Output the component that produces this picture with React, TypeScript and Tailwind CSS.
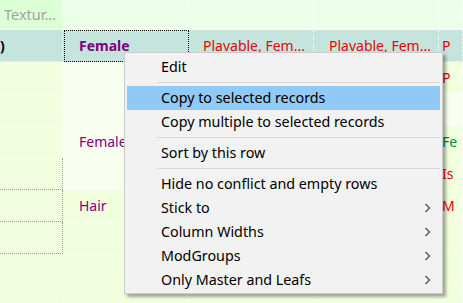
import React from "react";

const W = ["w-[63px]", "w-[125px]", "w-[126px]", "w-[125px]", "w-[24px]"];

type Cell = { t?: string; c?: string; b?: boolean; pl?: string };
type Row = { h: string; bg: string[]; bb: string; vr: string[]; cells: Cell[] };

const G = "border-[#9a9a9a]";
const Wh = "border-white";

const base = "bg-[#f2ffdf]";
const light = "bg-[#f8fff0]";

const rows: Row[] = [
  {
    h: "h-[30px]",
    bg: ["bg-[#dcffd5]", "bg-[#ecffe8]", "bg-[#ecffe8]", "bg-[#ecffe8]", "bg-[#ecffe8]"],
    bb: Wh,
    vr: [Wh, Wh, Wh, Wh, Wh],
    cells: [{ t: "Textur...", c: "text-[#a3a3a3] text-[14.5px]", pl: "pl-[4px]" }, {}, {}, {}, {}],
  },
  {
    h: "h-[32px]",
    bg: ["bg-[#c5e4dd]", "bg-[#c5e4dd]", "bg-[#c5e4dd]", "bg-[#c5e4dd]", "bg-[#c5e4dd]"],
    bb: "border-transparent",
    vr: [Wh, "border-transparent", Wh, Wh, Wh],
    cells: [
      { t: ")", c: "text-black", b: true, pl: "pl-0" },
      { t: "Female", c: "text-[#800080]", b: true, pl: "pl-[16px]" },
      { t: "Plavable, Fem...", c: "text-[#f00000]", pl: "pl-[15px]" },
      { t: "Plavable, Fem...", c: "text-[#f00000]", pl: "pl-[15px]" },
      { t: "P", c: "text-[#f00000]", pl: "pl-[3px]" },
    ],
  },
  {
    h: "h-[32px]",
    bg: [base, light, light, light, base],
    bb: Wh,
    vr: [G, Wh, Wh, Wh, Wh],
    cells: [{}, {}, {}, {}, { t: "P", c: "text-[#f00000]", pl: "pl-[3px]" }],
  },
  {
    h: "h-[32px]",
    bg: [base, light, light, light, light],
    bb: Wh,
    vr: [G, Wh, Wh, Wh, Wh],
    cells: [{}, {}, {}, {}, {}],
  },
  {
    h: "h-[32px]",
    bg: [base, light, light, light, base],
    bb: Wh,
    vr: [G, Wh, Wh, Wh, Wh],
    cells: [
      {},
      { t: "Female", c: "text-[#800080]", pl: "pl-[16px]" },
      {},
      {},
      { t: "Fe", c: "text-[#008a3a]", pl: "pl-[3px]" },
    ],
  },
  {
    h: "h-[32px]",
    bg: [base, light, light, light, base],
    bb: G,
    vr: [G, Wh, Wh, Wh, Wh],
    cells: [{}, {}, {}, {}, { t: "Is", c: "text-[#f00000]", pl: "pl-[3px]" }],
  },
  {
    h: "h-[32px]",
    bg: [base, base, base, base, base],
    bb: G,
    vr: [G, Wh, Wh, Wh, Wh],
    cells: [
      {},
      { t: "Hair", c: "text-[#800080]", pl: "pl-[16px]" },
      {},
      {},
      { t: "M", c: "text-[#f00000]", pl: "pl-[3px]" },
    ],
  },
  {
    h: "h-[32px]",
    bg: [base, base, base, base, base],
    bb: G,
    vr: [G, Wh, Wh, Wh, Wh],
    cells: [{}, {}, {}, {}, {}],
  },
  {
    h: "h-[33px]",
    bg: [base, base, base, base, base],
    bb: Wh,
    vr: [G, Wh, Wh, Wh, Wh],
    cells: [{}, {}, {}, {}, {}],
  },
  {
    h: "h-[32px]",
    bg: [base, base, base, base, base],
    bb: Wh,
    vr: [G, Wh, Wh, Wh, Wh],
    cells: [{}, {}, {}, {}, {}],
  },
];

function Chevron() {
  return (
    <svg width="7" height="10" viewBox="0 0 7 10" className="absolute right-[9px]">
      <path d="M1.5 1 L5.5 5 L1.5 9" fill="none" stroke="#4a4a4a" strokeWidth="1.2" />
    </svg>
  );
}

function Item({ label, hl, sub }: { label: string; hl?: boolean; sub?: boolean }) {
  return (
    <div
      className={
        "relative flex items-center h-[24px] pl-[34px] mx-[2px] " + (hl ? "bg-[#91c9f7]" : "")
      }
    >
      <span>{label}</span>
      {sub && <Chevron />}
    </div>
  );
}

function Sep() {
  return (
    <div className="h-[7px] flex items-center pl-[32px] pr-[2px]">
      <div className="h-px w-full bg-[#d7d7d7]" />
    </div>
  );
}

export default function App() {
  return (
    <div className="relative w-[463px] h-[303px] overflow-hidden bg-[#f2ffdf] font-['Noto_Sans',sans-serif] text-[14px]">
      <div className="flex flex-col">
        {rows.map((r, i) => (
          <div key={i} className={"flex " + r.h}>
            {r.cells.map((c, j) => (
              <div
                key={j}
                className={
                  "shrink-0 flex items-center overflow-hidden whitespace-nowrap border-r border-b border-dotted " +
                  W[j] +
                  " " +
                  r.bg[j] +
                  " " +
                  r.vr[j] +
                  " " +
                  r.bb +
                  " " +
                  (c.pl || "") +
                  " " +
                  (c.c || "") +
                  (c.b ? " font-bold" : "")
                }
              >
                {c.t}
              </div>
            ))}
          </div>
        ))}
      </div>
      {/* focus rectangle */}
      <div className="absolute left-[64px] top-[30px] w-[125px] h-[32px] border border-dotted border-black pointer-events-none" />
      {/* context menu */}
      <div className="absolute left-[124px] top-[52px] w-[319px] h-[242px] bg-[#f2f2f2] border border-[#cccccc] shadow-[3px_3px_3px_rgba(0,0,0,0.35)] pt-[2px] text-[14.3px] text-black leading-none">
        <Item label="Edit" />
        <Sep />
        <Item label="Copy to selected records" hl />
        <Item label="Copy multiple to selected records" />
        <Sep />
        <Item label="Sort by this row" />
        <Sep />
        <Item label="Hide no conflict and empty rows" />
        <Item label="Stick to" sub />
        <Item label="Column Widths" sub />
        <Item label="ModGroups" sub />
        <Item label="Only Master and Leafs" sub />
      </div>
    </div>
  );
}
